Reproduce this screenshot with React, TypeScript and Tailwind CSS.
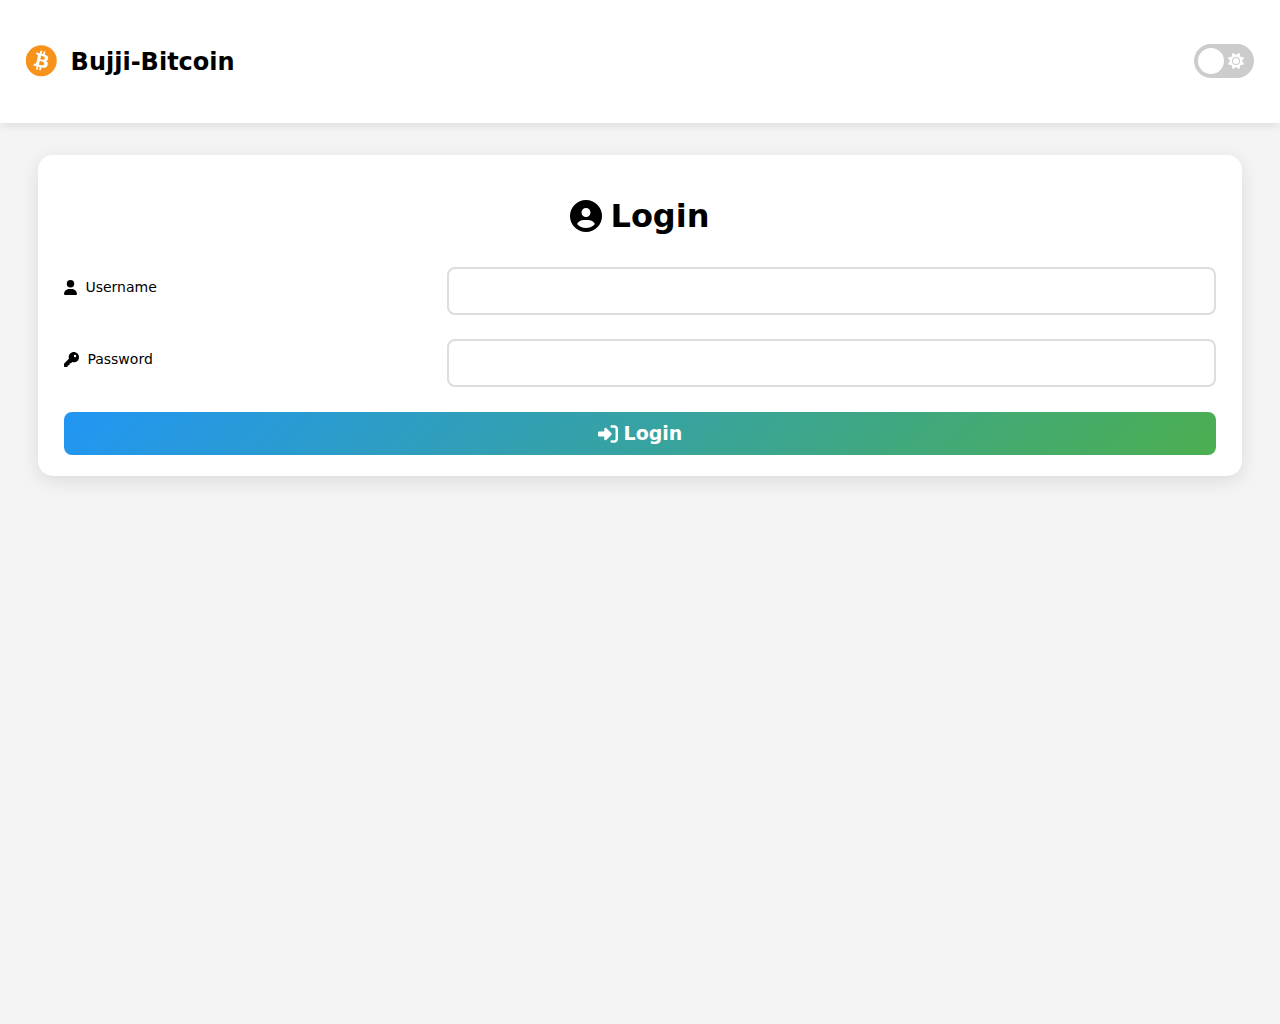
import { useState } from "react";
import type { ReactNode } from "react";
import { FaCircleUser, FaKey, FaRightToBracket, FaSun, FaUser } from "react-icons/fa6";

function BitcoinLogo() {
  return (
    <svg viewBox="1 0 65 65" className="size-8" aria-hidden="true">
      <circle cx="32" cy="32" r="31.5" fill="#f7931a" />
      <path
        fill="#ffffff"
        d="M46.103 27.444c.637-4.258-2.605-6.547-7.038-8.074l1.438-5.768-3.511-.875-1.4 5.616c-.923-.23-1.871-.447-2.813-.662l1.41-5.653-3.509-.875-1.439 5.766c-.764-.174-1.514-.346-2.242-.527l.004-.018-4.842-1.209-.934 3.75s2.605.597 2.55.634c1.422.355 1.679 1.296 1.636 2.042l-1.638 6.571c.098.025.225.061.365.117l-.371-.092-2.296 9.205c-.174.432-.615 1.08-1.609.834.035.051-2.552-.637-2.552-.637l-1.743 4.019 4.569 1.139c.85.213 1.683.436 2.503.646l-1.453 5.834 3.507.875 1.439-5.772c.958.26 1.888.5 2.798.726l-1.434 5.745 3.511.875 1.453-5.823c5.987 1.133 10.489.676 12.384-4.739 1.527-4.36-.076-6.875-3.226-8.515 2.294-.529 4.022-2.038 4.483-5.155zM38.081 38.693c-1.085 4.36-8.426 2.003-10.806 1.412l1.928-7.729c2.38.594 10.012 1.77 8.878 6.317zM39.167 27.381c-.99 3.966-7.1 1.951-9.082 1.457l1.748-7.01c1.982.494 8.365 1.416 7.334 5.553z"
      />
    </svg>
  );
}

function Header() {
  const [dark, setDark] = useState(false);
  return (
    <header className="relative flex items-center justify-between bg-white px-[2%] pt-11 pb-[45px] shadow-[0_2px_10px_rgba(0,0,0,0.1)]">
      <div className="flex items-center gap-[13px]">
        <BitcoinLogo />
        <span className="pt-0.5 text-2xl leading-8 font-bold">Bujji-Bitcoin</span>
      </div>
      <label className="relative flex h-[34px] w-[60px] cursor-pointer items-center justify-between rounded-full bg-[#cccccc] pr-[10px] pl-1">
        <input
          type="checkbox"
          role="switch"
          aria-label="Dark mode"
          className="peer sr-only"
          checked={dark}
          onChange={(e) => setDark(e.target.checked)}
        />
        <span className="size-[26px] rounded-full bg-white peer-checked:order-last" />
        <FaSun className="size-4 text-white" aria-hidden="true" />
      </label>
    </header>
  );
}

type FieldProps = { id: string; label: string; type: string; icon: ReactNode };

function Field({ id, label, type, icon }: FieldProps) {
  return (
    <div className="flex items-start">
      <label htmlFor={id} className="flex flex-1 items-center gap-2 pt-[10px] text-[14px] leading-5">
        {icon}
        {label}
      </label>
      <input
        id={id}
        name={id}
        type={type}
        className="h-12 w-[66.8%] rounded-lg border-2 border-[#dddddd] bg-white px-3 text-base outline-none focus:border-[#2196f3]"
      />
    </div>
  );
}

export default function App() {
  return (
    <div className="min-h-screen bg-[#f4f4f4] font-['DejaVu_Sans',sans-serif] text-black">
      <Header />
      <main className="mx-[3%] mt-8 rounded-[15px] bg-white px-[26px] pt-[41px] pb-[21px] shadow-[0_5px_20px_rgba(0,0,0,0.1)]">
        <h1 className="flex items-center justify-center gap-2 text-[32px] leading-10 font-bold">
          <FaCircleUser className="size-8" aria-hidden="true" />
          Login
        </h1>
        <form className="mt-[31px]" onSubmit={(e) => e.preventDefault()}>
          <div className="flex flex-col gap-6">
            <Field id="username" label="Username" type="text" icon={<FaUser className="h-[15px] w-[13px]" aria-hidden="true" />} />
            <Field id="password" label="Password" type="password" icon={<FaKey className="size-[15px]" aria-hidden="true" />} />
          </div>
          <button
            type="submit"
            className="mt-[25px] flex h-[43px] w-full cursor-pointer items-center justify-center gap-[6px] rounded-lg bg-[linear-gradient(135deg,#2196f3,#4caf50)] text-[19px] font-bold text-white"
          >
            <FaRightToBracket className="size-5" aria-hidden="true" />
            Login
          </button>
        </form>
      </main>
    </div>
  );
}
